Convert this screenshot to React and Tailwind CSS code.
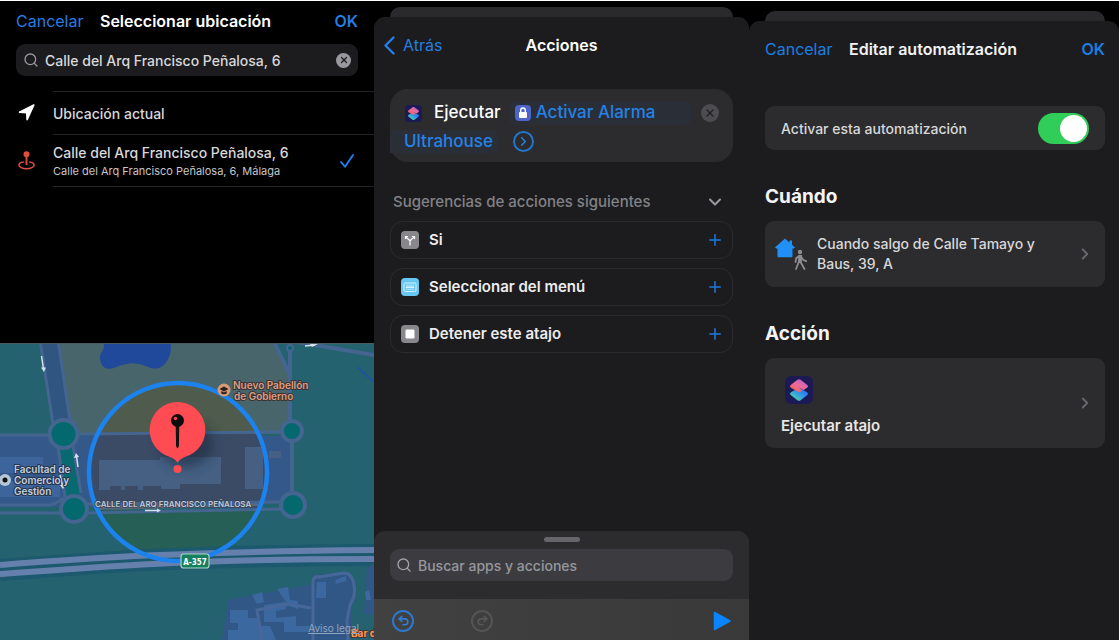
import React, { useId } from "react";
import { Search, ChevronRight, ChevronDown, Plus, X, Undo2, Redo2 } from "lucide-react";

function ShortcutsIcon({ className }) {
  const id = useId();
  return (
    <svg viewBox="0 0 28 28" className={className} aria-hidden="true">
      <defs>
        <linearGradient id={`${id}t`} x1="0.85" y1="0.1" x2="0.25" y2="0.9">
          <stop offset="0" stopColor="#b45fc4" />
          <stop offset="0.5" stopColor="#ee6a9c" />
          <stop offset="1" stopColor="#f2645c" />
        </linearGradient>
        <linearGradient id={`${id}b`} x1="0.9" y1="0.2" x2="0.2" y2="0.9">
          <stop offset="0" stopColor="#2f6fe6" />
          <stop offset="0.45" stopColor="#2f97ee" />
          <stop offset="1" stopColor="#4fd2a4" />
        </linearGradient>
      </defs>
      <rect width="28" height="28" rx="6" fill="#1c1a55" />
      <path d="M14 11.500 22 16.200C23.300 17 23.300 18.400 22 19.200L15.600 24.200C14.600 25 13.400 25 12.400 24.200L6 19.200C4.700 18.400 4.700 17 6 16.200Z" fill={`url(#${id}b)`} />
      <path d="M12.400 3.800C13.400 3 14.600 3 15.600 3.800L22 8.800C23.300 9.600 23.300 11 22 11.800L18.500 13.900 14 11.500 17 14.800 14 16.500 6 11.800C4.700 11 4.700 9.600 6 8.800Z" fill={`url(#${id}t)`} />
    </svg>
  );
}

function MapView() {
  return (
    <div className="relative min-h-0 overflow-hidden border-t border-[#4a5a5e] bg-[#24626f]">
      <svg viewBox="0 344 374 296" preserveAspectRatio="xMidYMid slice" className="absolute inset-0 size-full" aria-hidden="true">
        <defs>
          <clipPath id="radius"><circle cx="178" cy="472" r="89" /></clipPath>
          <filter id="shade" x="-50%" y="-50%" width="200%" height="200%"><feGaussianBlur stdDeviation="6" /></filter>
        </defs>
        <rect y="340" width="374" height="300" fill="#24626f" />
        <path d="M58 340H272L290 376V434H72Z" fill="#48656b" />
        <path d="M0 436H290V503L84 507 0 507Z" fill="#345889" />
        <g clipPath="url(#radius)">
          <rect x="80" y="380" width="200" height="54" fill="#4f5b4c" />
          <path d="M80 434H280V508H80Z" fill="#3b4b66" />
          <rect x="80" y="510" width="200" height="56" fill="#255f55" />
          <path d="M80 508 280 503" stroke="#5c6878" strokeWidth="5" />
        </g>
        <path d="M0 457H43V467H26V473H0ZM0 481H60V497H0Z" fill="#3d659c" />
        <path d="M99 460H160V457H221V484H180V489H161V486H143V490H138V486H125V490H121V486H110V490H99ZM245 447H263V489H245ZM269 451H281V458H269Z" fill="#456083" />
        <path d="M102 340C108 349 99 351 100 359C102 371 110 370 119 366C134 360 143 365 151 368C164 372 174 355 170 340Z" fill="#20489b" />
        <path d="M40 340 59 340 71 421 54 425Z" fill="#315581" />
        <path d="M58 446 65 498 80 494 74 446Z" fill="#086970" />
        <g fill="none" stroke="#43658f" strokeWidth="3">
          <path d="M40 340 53 424M58 340 70 420M0 435H50M77 434 290 432M58 446 65 497M73 446 81 493" />
          <path d="M0 505H50C58 504 59 500 64 498M0 513H64M84 504 282 502M85 513 282 509" />
          <path d="M290 340V420M292 440V496M273 340 290 375M291 341 374 355" strokeWidth="4" />
        </g>
        <path d="M357 367 374 382" stroke="#1f559c" strokeWidth="2" />
        <g fill="#04686f" stroke="#43658f" strokeWidth="4">
          <circle cx="63.500" cy="434" r="14" />
          <circle cx="74" cy="509" r="13" />
          <circle cx="292" cy="431" r="10" />
          <circle cx="293" cy="505" r="12" />
          <circle cx="290" cy="348" r="3" strokeWidth="2" />
        </g>
        <g fill="none">
          <path d="M0 570C110 562 170 556 374 555" stroke="#1c586e" strokeWidth="22" />
          <path d="M0 565C100 557 180 552 374 550" stroke="#6580ad" strokeWidth="6" />
          <path d="M0 574C110 566 190 559 374 559" stroke="#6580ad" strokeWidth="6" />
        </g>
        <path d="M228 600 313 584V577Q313 575 316 575L344 572Q350 572 353 582 356 591 352 600V640H222ZM367 568 374 563V616L364 614Z" fill="#315786" />
        <path d="M252 595 262 592 264 602 257 604ZM277 589 288 587 290 600 298 601V609L289 606ZM230 610H248V618H258V626H270L276 640H228V630H238V623H230ZM264 605 286 602V609L276 611V618L296 616V626H309V632H284V622H264ZM317 582H326V598H316ZM365 592 369 590 371 600H366ZM335 580 346 576V581L336 584Z" fill="#3c68a0" />
        <path d="M262 640 257 610 288 604 311 608M313 640V581Q314 576 319 577L344 573Q352 573 354 585 356 596 350 605L347 620 348 640" stroke="#47679a" strokeWidth="3" fill="none" />
        <circle cx="178" cy="472" r="89" fill="none" stroke="#1c82ee" strokeWidth="4.500" />
        <g stroke="#d4e1ee" fill="#d4e1ee" strokeWidth="1.500">
          <path d="M41.500 356 43.500 369M78 467 76.500 456M60 475 62.500 486M145 510.500H158M305 346 315 345" />
          <path d="M41 367.500H46L44 372ZM74 458 76 453 79 457ZM60 485H65L63 489ZM157 508.500 161 510.500 157 512.500ZM310 344H318L312 347Z" stroke="none" />
        </g>
        <ellipse cx="186" cy="444" rx="27" ry="23" fill="#1e2c3e" opacity="0.6" filter="url(#shade)" />
        <path d="M177.500 402a28 28 0 0 1 8 54.800c-4 1.500-6 3-8 6-2-3-4-4.500-8-6a28 28 0 0 1 8-54.800Z" fill="#ff4b52" />
        <circle cx="177.500" cy="469" r="4" fill="#ff4b52" />
        <path d="M176.200 424h2.600l-.4 22-.9 2-.9-2Z" fill="#111" stroke="#111" />
        <circle cx="177.500" cy="420.500" r="6.500" fill="#0d0d0f" />
        <circle cx="175.500" cy="418.500" r="1.800" fill="#e5484e" />
        <circle cx="224" cy="390" r="6.500" fill="#d79b78" />
        <path d="M219.500 389 224 386.500 228.500 389 224 391.500ZM221.300 391 224 392.500 226.700 391V393.500Q224 395 221.300 393.500Z" fill="#2a211f" />
        <circle cx="5" cy="480" r="6" fill="#b9c6d8" /><circle cx="5" cy="480" r="2.500" fill="#111" />
        <rect x="181" y="554" width="28" height="14" rx="2.500" fill="#168061" stroke="#a9d3c4" strokeWidth="1.200" />
        <g fontFamily="Inter, sans-serif" fontWeight="600" fontSize="10" paintOrder="stroke" strokeLinejoin="round">
          <g fill="#dc9d83" stroke="#3c3535" strokeWidth="2">
            <text x="233" y="389">Nuevo Pabellón</text>
            <text x="234" y="400">de Gobierno</text>
          </g>
          <g fill="#c3cddb" stroke="#26354c" strokeWidth="2">
            <text x="14" y="473">Facultad de</text>
            <text x="14" y="484">Comercio y</text>
            <text x="14" y="495">Gestión</text>
          </g>
          <text x="95" y="507" fontSize="8" fill="#c0cad8" stroke="#36455b" strokeWidth="1.500">CALLE DEL ARQ FRANCISCO PEÑALOSA</text>
          <text x="195" y="564.500" fontSize="10" fontWeight="700" fontFamily="'Liberation Sans Narrow', 'DejaVu Sans Condensed', Roboto, sans-serif" fill="#fff" textAnchor="middle"><tspan fontSize="8">A-357</tspan></text>
          <text x="351" y="637" fontWeight="700" fill="#ff9455" stroke="#4a3430" strokeWidth="2">Bar de</text>
        </g>
      </svg>
      <a href="#legal" className="absolute right-[15px] bottom-1 text-[10px] leading-4 text-[#8fa6bd] underline">Aviso legal</a>
    </div>
  );
}

function LocationPanel() {
  return (
    <section className="grid min-w-0 grid-rows-[342fr_297fr] bg-black">
      <div>
        <header className="flex h-10 items-center px-4 text-[16px] text-[#267de0]">
          <button className="w-[84px] text-left">Cancelar</button>
          <h1 className="flex-1 font-semibold text-white">Seleccionar ubicación</h1>
          <button className="font-semibold">OK</button>
        </header>
        <div className="mx-4 mt-[3px] flex h-8 items-center gap-[6px] rounded-[9px] bg-[#1c1c1f] px-[7px]">
          <Search className="size-4 text-[#97979d]" strokeWidth={2} aria-hidden="true" />
          <input aria-label="Buscar ubicación" defaultValue="Calle del Arq Francisco Peñalosa, 6" className="min-w-0 flex-1 bg-transparent text-[14px] font-medium text-[#d8d8da] outline-none" />
          <button aria-label="Borrar" className="grid size-[15px] place-items-center rounded-full bg-[#98989e]">
            <X className="size-[10px] text-[#1c1c1f]" strokeWidth={3} />
          </button>
        </div>
        <ul className="mt-[15px]">
          <li>
            <button className="flex h-[43px] w-full items-stretch text-left">
              <span className="flex w-[53px] items-center pl-[18px]">
                <svg viewBox="0 0 17 17" className="size-[17px]" aria-hidden="true"><path d="M15.800 1 1.500 8.100 8.700 8.600 9.100 15.700Z" fill="#fff" stroke="#fff" strokeWidth="1.600" strokeLinejoin="round" /></svg>
              </span>
              <span className="flex flex-1 items-center border-t border-[#232325] text-[14px] font-medium text-[#d8d8da]">Ubicación actual</span>
            </button>
          </li>
          <li>
            <button className="flex h-[53px] w-full items-stretch text-left">
              <span className="flex w-[53px] items-center pl-[18px]">
                <svg viewBox="0 0 17 19" className="h-[19px] w-[17px]" fill="none" stroke="#e04c42" strokeWidth="1.500" aria-hidden="true">
                  <circle cx="8.500" cy="3.200" r="3" fill="#e04c42" stroke="none" />
                  <path d="M8.500 5v9" strokeWidth="1.900" />
                  <path d="M5.800 10.900C2.700 11.300.9 12.500.9 14c0 2 3.400 3.700 7.600 3.700s7.600-1.700 7.600-3.700c0-1.500-1.800-2.700-4.900-3.100" />
                </svg>
              </span>
              <span className="flex flex-1 items-center border-y border-[#232325] pr-5">
                <span className="flex-1">
                  <span className="block text-[14px] leading-5 font-medium text-[#d8d8da]">Calle del Arq Francisco Peñalosa, 6</span>
                  <span className="block text-[11px] leading-4 text-[#c6c6c8]">Calle del Arq Francisco Peñalosa, 6, Málaga</span>
                </span>
                <svg viewBox="0 0 14 14" className="size-[14px]" aria-hidden="true"><path d="M1 8 5 12.700 13 1" fill="none" stroke="#1c80f0" strokeWidth="1.900" strokeLinecap="round" strokeLinejoin="round" /></svg>
              </span>
            </button>
          </li>
        </ul>
      </div>
      <MapView />
    </section>
  );
}

function Suggestion({ label, tint, children }) {
  return (
    <li>
      <button className="flex h-[38px] w-full items-center gap-[10px] rounded-[13px] border border-[#2b2b2d] px-2 pl-[10px] text-left">
        <svg viewBox="0 0 18 18" className="size-[18px]" aria-hidden="true">
          <rect width="18" height="18" rx="4" fill={tint} />
          {children}
        </svg>
        <span className="flex-1 text-[15px] font-semibold text-[#ececee]">{label}</span>
        <Plus className="size-[18px] text-[#1b79e2]" strokeWidth={2} aria-hidden="true" />
      </button>
    </li>
  );
}

function ActionsPanel() {
  return (
    <section className="flex min-w-0 flex-col bg-black pt-[6px]">
      <div className="mx-4 h-[10px] rounded-t-[10px] bg-[#2a2a2c]" />
      <div className="flex flex-1 flex-col rounded-t-[11px] bg-[#1c1c1e]">
        <header className="grid h-14 grid-cols-[1fr_auto_1fr] items-center px-[10px] text-[16px]">
          <button className="flex items-center gap-2 text-[#267de0]">
            <svg viewBox="0 0 11 19" className="h-[19px] w-[11px]" aria-hidden="true"><path d="M9.500 1.500 1.500 9.500 9.500 17.500" fill="none" stroke="#2582ec" strokeWidth="2.300" strokeLinecap="round" strokeLinejoin="round" /></svg>
            Atrás
          </button>
          <h2 className="font-semibold text-white">Acciones</h2>
        </header>
        <div className="mx-4 mt-4 flex h-[73px] rounded-[18px] bg-[#2c2c2e] pt-[10px] pr-[14px] text-[17px] font-medium text-[#2582e6]">
          <div className="flex-1">
            <div className="flex h-7 items-center pl-[15px]">
              <ShortcutsIcon className="size-[17px]" />
              <span className="ml-3 text-white">Ejecutar</span>
              <button className="ml-2 flex h-[23px] flex-1 items-center gap-[5px] rounded-[6px] bg-[#2a2e37] pl-[6px] text-left">
                <svg viewBox="0 0 16 16" className="size-4" aria-hidden="true">
                  <rect width="16" height="16" rx="4" fill="#4b65c8" />
                  <rect x="4" y="7" width="8" height="6" rx="1" fill="#fff" />
                  <path d="M5.700 7V5.300a2.300 2.300 0 0 1 4.600 0V7" fill="none" stroke="#fff" strokeWidth="1.400" />
                </svg>
                Activar Alarma
              </button>
            </div>
            <div className="flex h-7 items-center gap-[15px]">
              <button className="h-[23px] rounded-r-[6px] bg-[#2a2e37] pr-[5px] pl-[14px] leading-[23px]">Ultrahouse</button>
              <button aria-label="Mostrar más" className="grid size-[21px] place-items-center rounded-full border-2 border-[#2275cb]">
                <ChevronRight className="size-[15px]" strokeWidth={2.4} />
              </button>
            </div>
          </div>
          <button aria-label="Eliminar acción" className="mt-[5px] ml-[10px] grid size-[18px] place-items-center rounded-full bg-[#4d4d51]">
            <X className="size-3 text-[#202022]" strokeWidth={2.5} />
          </button>
        </div>
        <button className="mt-7 ml-[19px] mr-6 flex h-6 items-center justify-between text-[15px] font-medium text-[#828287]">
          Sugerencias de acciones siguientes
          <ChevronDown className="size-5 text-[#98989d]" strokeWidth={2.5} aria-hidden="true" />
        </button>
        <ul className="mx-4 mt-[7px] flex flex-col gap-[9px]">
          <Suggestion label="Si" tint="#87878c">
            <path d="M9 14.500V9.800L5 6M9 9.800 13 6M4.500 8V5.500H7M13.500 8V5.500H11" fill="none" stroke="#fff" strokeWidth="1.200" />
          </Suggestion>
          <Suggestion label="Seleccionar del menú" tint="#67c9f3">
            <rect x="3" y="5" width="12" height="8.500" rx="1.200" fill="none" stroke="#d6f2ff" />
            <path d="M5 7.200h8M5 11.200h8" stroke="#d6f2ff" strokeWidth="0.700" />
            <path d="M4.800 9.200h8.400" stroke="#d6f2ff" strokeWidth="1.600" />
          </Suggestion>
          <Suggestion label="Detener este atajo" tint="#87878c">
            <rect x="4.500" y="4.500" width="9" height="9" rx="1.200" fill="#fff" />
          </Suggestion>
        </ul>
        <footer className="mt-auto rounded-t-[11px] bg-[#2c2c2e] pt-[6px]">
          <div className="mx-auto h-[5px] w-9 rounded-full bg-[#66666a]" />
          <label className="mx-4 mt-[7px] flex h-8 items-center gap-[6px] rounded-[9px] bg-[#3c3c40] px-[6px]">
            <Search className="size-4 text-[#a2a2a8]" strokeWidth={2} aria-hidden="true" />
            <input aria-label="Buscar apps y acciones" placeholder="Buscar apps y acciones" className="min-w-0 flex-1 bg-transparent text-[14px] font-medium text-white outline-none placeholder:text-[#97979d]" />
          </label>
          <div className="mt-[18px] flex h-[41px] items-center bg-linear-to-r from-[#414142] to-[#39393a] px-[18px] pt-[2px]">
            <button aria-label="Deshacer" className="grid size-[22px] place-items-center rounded-full border-2 border-[#2d78cc] text-[#2d7fda]">
              <Undo2 className="size-[13px]" strokeWidth={2.8} />
            </button>
            <button aria-label="Rehacer" className="ml-[57px] grid size-[22px] place-items-center rounded-full border-2 border-[#545456] text-[#58585a]">
              <Redo2 className="size-[13px]" strokeWidth={2.8} />
            </button>
            <button aria-label="Ejecutar" className="ml-auto">
              <svg viewBox="0 0 18 20" className="h-5 w-[18px]" aria-hidden="true"><path d="M1.500 1.500v17L17 10Z" fill="#0a84ff" stroke="#0a84ff" strokeWidth="1.500" strokeLinejoin="round" /></svg>
            </button>
          </div>
        </footer>
      </div>
    </section>
  );
}

function AutomationPanel() {
  return (
    <section className="flex min-w-0 flex-col bg-black pt-[10px]">
      <div className="mr-[14px] ml-4 h-[10px] rounded-t-[10px] bg-[#2a2a2c]" />
      <div className="flex-1 rounded-t-[11px] bg-[#1c1c1e] pr-[14px] pl-4">
        <header className="flex h-14 items-center text-[16px] text-[#1b7fe2]">
          <button className="w-[84px] text-left">Cancelar</button>
          <h2 className="flex-1 font-semibold text-[#f1f1f3]">Editar automatización</h2>
          <button className="font-semibold">OK</button>
        </header>
        <label className="mt-[29px] flex h-11 items-center justify-between rounded-[9px] bg-[#2c2c2e] px-4 text-[14px] font-medium text-[#d8d8da]">
          Activar esta automatización
          <input type="checkbox" role="switch" defaultChecked className="flex h-[31px] w-[51px] appearance-none items-center rounded-full bg-[#48484a] p-[2px] before:size-[27px] before:rounded-full before:bg-white checked:justify-end checked:bg-[#30cd58]" />
        </label>
        <h3 className="mt-[33px] text-[19px] leading-7 font-bold text-[#f4f4f6]">Cuándo</h3>
        <button className="mt-[10px] flex h-[66px] w-full items-center rounded-[9px] bg-[#2c2c2e] pr-[14px] pl-[10px] text-left">
          <svg viewBox="0 0 32 32" className="mr-[10px] size-8" aria-hidden="true">
            <path d="M10 .5 0 9.500l1.200 1H2.500V18c0 .8.500 1.300 1.300 1.300h12.400c.8 0 1.300-.5 1.300-1.300v-7.500h1.300l1.200-1-3-2.700V2.500h-2.500v2Z" fill="#2090f6" />
            <circle cx="25" cy="14" r="2.200" fill="#8d8d90" />
            <path d="M24.500 18 23.800 24 21 31M25.500 18 25.500 24 29.500 31M24.500 17.800 21.300 20 20.500 24M26 18.500 28.300 22 31.200 23.200" fill="none" stroke="#8d8d90" strokeWidth="1.800" strokeLinecap="round" strokeLinejoin="round" />
            <path d="M23.300 17h3.800l-.4 8h-3.400Z" fill="#8d8d90" />
          </svg>
          <span className="flex-1 pr-8 text-[14px] leading-5 font-medium text-[#d8d8da]">Cuando salgo de Calle Tamayo y Baus, 39, A</span>
          <ChevronRight className="-mr-[3px] size-[18px] text-[#69696d]" strokeWidth={2.4} aria-hidden="true" />
        </button>
        <h3 className="mt-[33px] text-[19px] leading-7 font-bold text-[#f4f4f6]">Acción</h3>
        <button className="mt-[10px] flex h-[90px] w-full items-center rounded-[9px] bg-[#2c2c2e] pr-[14px] pl-4 text-left">
          <span className="flex-1 pt-[6px]">
            <ShortcutsIcon className="mb-3 ml-1 size-7" />
            <span className="block text-[15px] leading-5 font-semibold text-[#e6e6e8]">Ejecutar atajo</span>
          </span>
          <ChevronRight className="-mr-[3px] size-[18px] text-[#69696d]" strokeWidth={2.4} aria-hidden="true" />
        </button>
      </div>
    </section>
  );
}

export default function App() {
  return (
    <main className="grid min-h-screen grid-cols-[374fr_375fr_370fr] border-t border-white bg-black font-['Inter',sans-serif]">
      <LocationPanel />
      <ActionsPanel />
      <AutomationPanel />
    </main>
  );
}
